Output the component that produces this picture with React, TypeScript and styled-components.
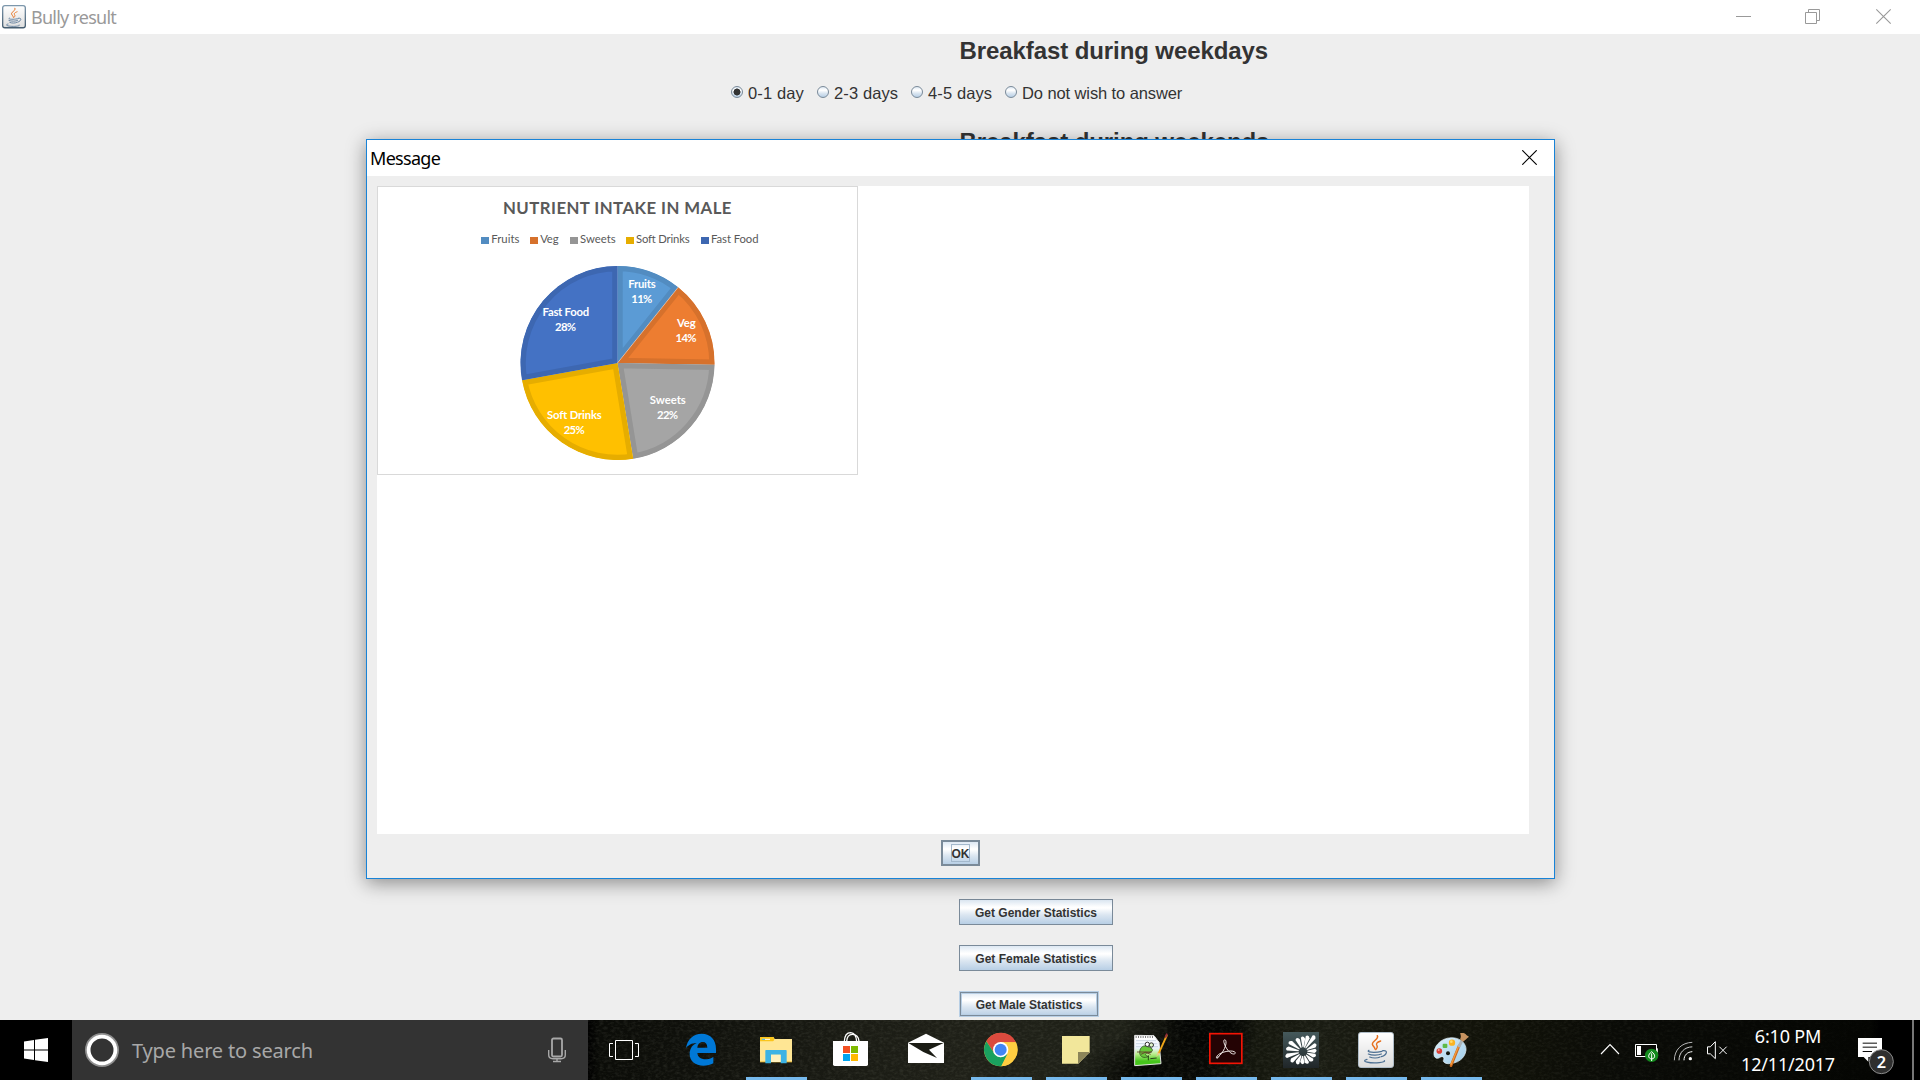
import React from "react";
import styled, { createGlobalStyle } from "styled-components";

const GlobalStyle = createGlobalStyle`
  html, body { margin: 0; padding: 0; overflow: hidden; }
  * { box-sizing: border-box; }
`;

const swing = `"Liberation Sans", Arial, sans-serif`;
const segoe = `"Noto Sans", "Segoe UI", sans-serif`;
const metal = `linear-gradient(180deg, #dde8f3 0%, #ffffff 30%, #ffffff 34%, #dbe6f1 62%, #b8cfe5 100%)`;

const Screen = styled.div`
  width: 1920px;
  height: 1080px;
  display: flex;
  flex-direction: column;
  background: #eeeeee;
  position: relative;
  overflow: hidden;
`;

const TitleBar = styled.header`
  height: 34px;
  flex: none;
  display: flex;
  align-items: center;
  gap: 5px;
  background: #ffffff;
  padding-left: 2px;
  svg { display: block; flex: none; }
`;

const WindowTitle = styled.span<{ $dim?: boolean; $spacing: number }>`
  font: 18px/34px ${segoe};
  letter-spacing: ${(p) => p.$spacing}px;
  color: ${(p) => (p.$dim ? "#999999" : "#000000")};
  white-space: nowrap;
  flex: 1;
`;

const Form = styled.main`
  flex: 1;
  min-height: 0;
  display: flex;
  flex-direction: column;
`;

const Question = styled.h2`
  margin: 0 0 0 959.5px;
  font: bold 24px/34px ${swing};
  letter-spacing: -0.09px;
  color: #333333;
  height: 34px;
  white-space: nowrap;
`;

const RadioRow = styled.div`
  display: flex;
  align-items: center;
  height: 24px;
  margin: 13px 0 19.5px 731px;
`;

const RadioLabel = styled.label<{ $width: number; $spacing?: number }>`
  width: ${(p) => p.$width}px;
  display: flex;
  align-items: center;
  gap: 5px;
  font: 16.5px/24px ${swing};
  letter-spacing: ${(p) => p.$spacing ?? 0.12}px;
  color: #333333;
  white-space: nowrap;
`;

const RadioDot = styled.span<{ $on?: boolean }>`
  width: 12px;
  height: 12px;
  margin-bottom: 2px;
  flex: none;
  border: 1px solid #7a8a99;
  border-radius: 50%;
  background: ${(p) =>
    p.$on
      ? "radial-gradient(circle, #333 0 3.2px, transparent 3.8px), " + metal
      : metal};
`;

const StatButtons = styled.div`
  margin: auto 0 3px 959px;
  display: flex;
  flex-direction: column;
  align-items: flex-start;
  gap: 20px;
`;

const MetalButton = styled.button<{ $width: number; $focus?: boolean }>`
  width: ${(p) => p.$width}px;
  height: 26px;
  padding: 2px 0 0;
  border: 1px solid ${(p) => (p.$focus ? "#b8cfe5" : "#7a8a99")};
  box-shadow: ${(p) => (p.$focus ? "inset 0 0 0 1px #7a8a99, inset 0 0 0 2px #b8cfe5" : "none")};
  background: ${metal};
  font: bold 12px/22px ${swing};
  color: #333333;
  white-space: nowrap;
`;

const Dialog = styled.section`
  position: absolute;
  left: 366px;
  top: 139px;
  width: 1189px;
  height: 740px;
  border: 1px solid #1883d7;
  background: #eeeeee;
  box-shadow: 0 4px 18px rgba(0, 0, 0, 0.42);
  display: flex;
  flex-direction: column;
`;

const DialogTitle = styled.header`
  height: 36px;
  flex: none;
  display: flex;
  align-items: center;
  background: #ffffff;
  padding: 0 17px 0 3px;
  svg { display: block; margin-bottom: 1px; }
`;

const MessagePane = styled.div`
  height: 648px;
  margin: 10px 25px 6px 10px;
  background: #ffffff;
  svg { display: block; }
`;

const OkButton = styled.button`
  align-self: flex-start;
  margin-left: 574px;
  width: 39px;
  height: 26px;
  padding: 0;
  border: 2px solid #7a8a99;
  background: ${metal};
  display: flex;
  align-items: center;
  justify-content: center;
`;

const OkText = styled.span`
  width: 19px;
  height: 18px;
  padding-top: 1px;
  border: 1px solid #a3b8cc;
  font: bold 12px/16px ${swing};
  letter-spacing: -0.1px;
  color: #333333;
  display: flex;
  justify-content: center;
`;

const Taskbar = styled.footer`
  height: 60px;
  flex: none;
  display: flex;
  position: relative;
  isolation: isolate;
  background:
    radial-gradient(ellipse 50px 60px at 1208px 0, #040503 40%, transparent),
    radial-gradient(ellipse 70px 50px at 1150px 100%, #060704 30%, transparent),
    linear-gradient(90deg, #000 0, #000 588px, #0b0c08 600px, #10110c 700px, #1a1b14 840px, #1f2018 960px, #1f2118 1120px, #090a06 1190px, #15170e 1260px, #1a1c13 1320px, #14150d 1400px, #111209 1500px, #0a0b07 1620px, #060704 1800px, #050603 1870px, #000 1880px);
`;

const Texture = styled.svg`
  position: absolute;
  left: 588px;
  top: 0;
  z-index: -1;
`;

const StartButton = styled.div`
  width: 72px;
  display: flex;
  align-items: center;
  justify-content: center;
`;

const SearchBox = styled.div`
  width: 516px;
  background: #333333;
  display: flex;
  align-items: center;
  padding: 0 21px 0 12px;
`;

const SearchText = styled.span`
  flex: 1;
  margin-left: 12px;
  font: 20px/60px ${segoe};
  letter-spacing: -0.17px;
  color: #a8a8a8;
  padding-top: 2px;
  white-space: nowrap;
`;

const TaskViewButton = styled.div`
  width: 76px;
  svg { display: block; }
`;

const AppButton = styled.div<{ $running?: boolean }>`
  width: 75px;
  height: 60px;
  background: ${(p) =>
    p.$running ? "linear-gradient(#76b9ed, #76b9ed) 7px 57px / 61px 3px no-repeat" : "none"};
  svg { display: block; }
`;

const Tray = styled.div`
  margin-left: 105px;
  display: flex;
  svg { display: block; flex: none; }
`;

const Clock = styled.div`
  width: 108px;
  display: flex;
  flex-direction: column;
  align-items: center;
  padding-top: 2px;
  margin-right: 8px;
  font: 18px/28px ${segoe};
  letter-spacing: -0.18px;
  color: #ffffff;
`;

const ShowDesktop = styled.div`
  margin-left: 12px;
  width: 8px;
  border-left: 2px solid #777777;
`;

/* ---------- pie chart ---------- */

type Slice = {
  name: string; pct: string; from: number; to: number; fill: string; edge: string;
  x: number; y: number; w: number; keyX: number; textX: number; textW: number;
};

const slices: Slice[] = [
  { name: "Fruits", pct: "11%", from: 0, to: 38.7, fill: "#5b9bd5", edge: "#528cc1", x: 265, y: 102.3, w: 27.3, keyX: 104, textX: 114.2, textW: 28.3 },
  { name: "Veg", pct: "14%", from: 38.7, to: 91, fill: "#ed7d31", edge: "#d6712c", x: 309.3, y: 141, w: 18.7, keyX: 153, textX: 163.2, textW: 18.3 },
  { name: "Sweets", pct: "22%", from: 91, to: 170.7, fill: "#a5a5a5", edge: "#959595", x: 290.8, y: 218, w: 36, keyX: 193, textX: 203, textW: 35.6 },
  { name: "Soft Drinks", pct: "25%", from: 170.7, to: 259.7, fill: "#ffc000", edge: "#e6ad00", x: 197.4, y: 233, w: 54.7, keyX: 249, textX: 259, textW: 53.7 },
  { name: "Fast Food", pct: "28%", from: 259.7, to: 360, fill: "#4472c4", edge: "#3d67b1", x: 188.8, y: 130, w: 46.5, keyX: 324, textX: 334, textW: 47.5 },
];

const CX = 240.5, CY = 177, R = 97;
const point = (deg: number) => {
  const a = (deg * Math.PI) / 180;
  return `${CX + R * Math.sin(a)} ${CY - R * Math.cos(a)}`;
};

function NutrientChart() {
  return (
    <svg width="481" height="289" viewBox="0 0 481 289" fontFamily="Lato, Carlito, sans-serif">
      <rect x="0.5" y="0.5" width="480" height="288" fill="#fff" stroke="#d9d9d9" />
      <text x="126" y="28" fontSize="16.8" fontWeight="700" fill="#595959" textLength="228.5">NUTRIENT INTAKE IN MALE</text>
      {slices.map((s, i) => {
        const d = `M${CX} ${CY} L${point(s.from)} A${R} ${R} 0 0 1 ${point(s.to)} Z`;
        return (
          <g key={s.name}>
            <rect x={s.keyX} y="51" width="8" height="7" fill={s.edge} />
            <text x={s.textX} y="56.7" fontSize="11.3" fill="#595959" textLength={s.textW}>{s.name}</text>
            <clipPath id={`slice${i}`}><path d={d} /></clipPath>
            <path d={d} fill={s.fill} stroke={s.edge} strokeWidth="10.5" clipPath={`url(#slice${i})`} />
          </g>
        );
      })}
      <path d={`M${CX} ${CY} L${point(38.7)}`} stroke="#e8d8cc" strokeWidth="0.6" />
      {slices.map((s) => (
        <g key={s.name} fill="#fff" fontSize="11.3" fontWeight="700">
          <text x={s.x - s.w / 2} y={s.y} textLength={s.w}>{s.name}</text>
          <text x={s.x - 10.7} y={s.y + 15} textLength="21">{s.pct}</text>
        </g>
      ))}
    </svg>
  );
}

/* ---------- icons ---------- */

function JavaGlyph() {
  return (
    <>
      <g fill="none" stroke="#e76f1c" strokeLinecap="round">
        <path d="M58 11 C64 22 42 27 43 36 C44 43 50 44 51 51" strokeWidth="4.5" />
        <path d="M68 27 C56 31 53 35 57 41 C60 46 57 49 53 53" strokeWidth="4" />
      </g>
      <g fill="none" stroke="#4c6f92" strokeLinecap="round" strokeWidth="3.6">
        <path d="M33 55 C22 61 50 63 72 58" />
        <path d="M31 66 C42 71 62 70 70 66" />
        <path d="M35 75 C44 79 59 79 66 75" />
        <path d="M74 56 C91 53 88 69 70 74" />
        <path d="M27 82 C5 88 37 95 64 92 C75 91 82 88 79 86" />
      </g>
    </>
  );
}

function JavaTitleIcon() {
  return (
    <svg width="24" height="26" viewBox="0 0 108 117">
      <defs>
        <linearGradient id="jt" x1="0" y1="0" x2="0" y2="1">
          <stop offset="0" stopColor="#fff" /><stop offset="1" stopColor="#dedede" />
        </linearGradient>
        <linearGradient id="jb" x1="0" y1="0" x2="0" y2="1">
          <stop offset="0" stopColor="#7d97ac" /><stop offset="1" stopColor="#465d70" />
        </linearGradient>
      </defs>
      <rect x="3" y="7" width="102" height="100" rx="10" fill="url(#jt)" stroke="url(#jb)" strokeWidth="6" />
      <g transform="translate(0 8)"><JavaGlyph /></g>
    </svg>
  );
}

const CloseIcon = ({ color }: { color: string }) => (
  <svg width="15" height="15" viewBox="0 0 15 15">
    <path d="M0.3 0.3 L14.7 14.7 M14.7 0.3 L0.3 14.7" stroke={color} strokeWidth="1.15" />
  </svg>
);

function CaptionButtons() {
  return (
    <svg width="184" height="34" viewBox="1736 0 184 34" fill="none" stroke="#999" strokeWidth="1">
      <path d="M1736 16.5 H1751" />
      <path d="M1805.5 12.5 H1816.5 V23.5 H1805.5 Z M1808.5 12 V9.5 H1819.5 V20.5 H1817" />
      <path d="M1876.3 9.3 L1890.7 23.7 M1890.7 9.3 L1876.3 23.7" strokeWidth="1.1" />
    </svg>
  );
}

const SlotIcon = ({ x, w = 225, children }: { x: number; w?: number; children: React.ReactNode }) => (
  <svg width={w / 3} height="60" viewBox={`${x} 30 ${w} 180`}>{children}</svg>
);

const Edge = () => (
  <SlotIcon x={252}>
    <path fill="#0078d7" d="M318 114 C322 88 340 71 365 71 C393 71 408 91 408 116 V129 H352 C353 144 368 149 380 148 C388 147 395 144 400 141 V160 C392 165 381 167 371 167 C345 167 329 153 329 132 C329 116 338 104 350 99 C342 99 328 101 318 114 Z M352 113 H382 C382 102 377 96 368 96 C359 96 353 103 352 113 Z" />
  </SlotIcon>
);

const Explorer = () => (
  <SlotIcon x={477}>
    <path d="M540 83 Q540 81 543 81 H580 L584 87 H636 V156 H540 Z" fill="#ffe694" />
    <path d="M540 83 Q540 81 543 81 H578 Q583 81 583 87 Q583 94 575 94 H540 Z" fill="#fac51c" />
    <path d="M546 88 H570" stroke="#fff" strokeWidth="3" /><path d="M546 88 H555" stroke="#3db3e4" strokeWidth="3" />
    <path d="M540 154 H636 V157 H540 Z" fill="#e8b93e" />
    <path d="M557 120 H618 Q620 120 620 123 V160 H602 V134 H573 V160 H556 V122 Z" fill="#3db3e4" />
    <path d="M573 134 H602 V156 H573 Z" fill="#fff1bd" />
  </SlotIcon>
);

const Store = () => (
  <SlotIcon x={702}>
    <path d="M793 94 C794 75 801 68 812 68 C825 69 829 80 830 94 M800 94 C801 79 807 73 817 73 C829 73 836 82 837 94" fill="none" stroke="#fff" strokeWidth="4" />
    <path d="M759 93 H864 V163 Q864 168 859 168 H764 Q759 168 759 163 Z" fill="#fff" />
    <rect x="789" y="108" width="21" height="21" fill="#f25022" />
    <rect x="813" y="108" width="21" height="21" fill="#7fba00" />
    <rect x="789" y="132" width="21" height="21" fill="#00a4ef" />
    <rect x="813" y="132" width="21" height="21" fill="#ffb900" />
  </SlotIcon>
);

const Mail = () => (
  <SlotIcon x={927}>
    <path d="M984 98 L1038 71 L1092 98 V159 H984 Z" fill="#fff" />
    <path d="M985 99 H1091 L1047 119 L1071 144 L1030 126 Z" fill="#1b1c15" />
  </SlotIcon>
);

const Chrome = () => (
  <SlotIcon x={-48}>
    <circle cx="62" cy="119" r="50" fill="#ffcd41" />
    <path d="M62 119 L62 97 H108 A50 50 0 0 0 19 94 L43 130 Z" fill="#db4a3e" />
    <path d="M19 94 L43 130 L62 142 L83 131 L64 169 A50 50 0 0 1 19 94 Z" fill="#1aa15f" />
    <path d="M83 131 L64 169 A50 50 0 0 0 108 97 H62 Z" fill="#ffcd41" />
    <circle cx="62" cy="119" r="23" fill="#fff" />
    <circle cx="62" cy="119" r="18" fill="#4285f4" />
  </SlotIcon>
);

const Notes = () => (
  <SlotIcon x={177}>
    <path d="M246 78 H329 V127 L295 161 H246 Z" fill="#f2e79b" />
    <path d="M294 126 H329 L294 161 Z" fill="#8c8559" />
  </SlotIcon>
);

const NotepadPlus = () => (
  <SlotIcon x={402}>
    <defs>
      <linearGradient id="npp" x1="0" y1="0" x2="0" y2="1">
        <stop offset="0.1" stopColor="#fff" /><stop offset="0.42" stopColor="#eaf3ff" />
        <stop offset="0.62" stopColor="#b9ee8a" /><stop offset="0.85" stopColor="#46c51c" />
      </linearGradient>
    </defs>
    <path d="M464 76 L522 77 L537 97 L543 161 L464 167 Z" fill="url(#npp)" stroke="#e4e4e4" strokeWidth="3" />
    <path d="M467 81 H520" stroke="#555" strokeWidth="5" strokeDasharray="3 4" />
    <path d="M468 92 H528 M468 101 H532 M468 110 H534" stroke="#b8c6d8" strokeWidth="2" />
    <path d="M479 128 C479 110 493 104 503 110 C519 112 524 127 505 128 C495 129 493 136 505 140 C493 145 480 142 479 128 Z" fill="#67c63b" stroke="#33561e" strokeWidth="2.5" />
    <circle cx="502" cy="103" r="6.5" fill="#fff" stroke="#333" strokeWidth="3" />
    <circle cx="514" cy="105" r="6.5" fill="#dff5cc" stroke="#333" strokeWidth="3" />
    <path d="M471 126 H515 M483 133 L496 127 L512 133" stroke="#673329" strokeWidth="2.5" fill="none" />
    <path d="M505 136 V151 M511 146 L530 144" stroke="#294518" strokeWidth="3" />
    <path d="M561 75 L536 130" stroke="#efa618" strokeWidth="5.5" />
    <path d="M561 71 L556 83" stroke="#932f38" strokeWidth="5.5" />
    <path d="M533 126 L529 140 L539 131 Z" fill="#e9c88d" />
  </SlotIcon>
);

const Acrobat = () => (
  <SlotIcon x={627}>
    <rect x="689.5" y="71" width="96" height="89" fill="#240304" stroke="#f31405" strokeWidth="5" />
    <path d="M710 143 C723 138 740 110 738 95 C737 86 729 88 732 98 C737 116 751 132 761 132 C771 131 766 123 752 123 C734 123 713 132 710 140 C708 145 711 147 717 140" fill="none" stroke="#eee7e5" strokeWidth="3" />
  </SlotIcon>
);

const Flower = () => (
  <SlotIcon x={42}>
    <defs><linearGradient id="fl" x1="0" y1="0" x2="0" y2="1"><stop offset="0" stopColor="#45595b" /><stop offset="1" stopColor="#202629" /></linearGradient></defs>
    <rect x="99" y="66" width="108" height="108" fill="url(#fl)" />
    <g fill="#fff">
      {[[-24, 46], [0, 47], [18, 52], [37, 61], [62, 47], [86, 42], [110, 42], [135, 42], [160, 40], [184, 39], [207, 43], [231, 49], [256, 56], [282, 53], [306, 53]].map(([a, len]) => (
        <path key={a} transform={`rotate(${a} 159 125)`} d={`M157.5 112 L152.5 ${125 - len + 5} Q159 ${125 - len - 4} 165.5 ${125 - len + 8} L160.5 112 Z`} />
      ))}
    </g>
  </SlotIcon>
);

const JavaApp = () => (
  <SlotIcon x={267}>
    <defs><linearGradient id="ja" x1="0" y1="0" x2="0" y2="1"><stop offset="0" stopColor="#fff" /><stop offset="1" stopColor="#dcdcdc" /></linearGradient></defs>
    <rect x="325.5" y="67.5" width="105" height="105" rx="7" fill="url(#ja)" stroke="#b0bdc8" strokeWidth="3" />
    <g transform="translate(324 66)"><JavaGlyph /></g>
  </SlotIcon>
);

const Paint = () => (
  <SlotIcon x={492}>
    <defs><linearGradient id="pa" x1="0" y1="0" x2="1" y2="1"><stop offset="0" stopColor="#dceffa" /><stop offset="1" stopColor="#9fcdea" /></linearGradient></defs>
    <path d="M552 135 C549 112 570 84 604 83 C634 83 650 103 648 121 C645 146 622 161 595 161 C585 161 577 155 581 149 C584 142 577 137 570 142 C562 148 554 145 552 135 Z" fill="url(#pa)" stroke="#eaf6fc" strokeWidth="2" />
    <circle cx="594" cy="130" r="6" fill="#15180f" />
    <circle cx="568" cy="123" r="8.5" fill="#dc4137" /><circle cx="566" cy="120" r="3" fill="#f4a29b" />
    <rect x="578" y="101" width="14" height="13" rx="3" fill="#5fba47" />
    <circle cx="606" cy="98" r="9.5" fill="#fbb321" /><circle cx="604" cy="95" r="4" fill="#ffdc6a" />
    <path d="M627 108 L603 167" stroke="#c9671b" strokeWidth="8" strokeLinecap="round" />
    <path d="M626 108 L603 164" stroke="#f39a3d" strokeWidth="4" strokeLinecap="round" />
    <path d="M636 92 L626 111" stroke="#aab4ba" strokeWidth="9" />
    <path d="M630 70 C637 68 645 68 650 76 L657 80 C651 84 644 92 639 95 L630 88 C634 82 633 76 630 70 Z" fill="#c69260" />
  </SlotIcon>
);

const apps: [React.FC, boolean][] = [
  [Edge, false], [Explorer, true], [Store, false], [Mail, false], [Chrome, true], [Notes, true],
  [NotepadPlus, true], [Acrobat, true], [Flower, true], [JavaApp, true], [Paint, true],
];

function TrayIcons() {
  return (
    <>
      <SlotIcon x={102} w={102}><path d="M123 132 L150 104 L177 132" fill="none" stroke="#fff" strokeWidth="3.5" /></SlotIcon>
      <SlotIcon x={204} w={117}>
        <path d="M226.5 103.5 H289.5 V139.5 H226.5 Z M292 115 V128" fill="none" stroke="#fff" strokeWidth="3" />
        <rect x="231" y="108" width="12" height="27" fill="#fff" />
        <circle cx="275" cy="136" r="20" fill="#128a1c" />
        <path d="M275 125 C263 134 263 145 275 147 C287 145 287 134 275 125 Z M275 130 V153" fill="none" stroke="#fff" strokeWidth="3" />
      </SlotIcon>
      <SlotIcon x={321} w={99}>
        <g fill="none" strokeWidth="3">
          <path d="M343 151 C343 119 365 98 397 97" stroke="#b5b5b5" />
          <path d="M357 151 C357 128 373 111 397 110.5" stroke="#d0d0d0" />
          <path d="M372 151 C372 135 382 126 397 125" stroke="#fff" />
        </g>
        <circle cx="391" cy="146" r="5" fill="#fff" />
      </SlotIcon>
      <SlotIcon x={420} w={102}>
        <path d="M442.5 110.5 H451 L466 95 V146 L451 131.5 H442.5 Z M478 110 L500 132 M500 110 L478 132" fill="none" stroke="#fff" strokeWidth="3" />
      </SlotIcon>
    </>
  );
}

const Notifications = () => (
  <SlotIcon x={870} w={150}>
    <path d="M894 84 H966 V141 H925 V155 L911 141 H894 Z" fill="#fff" />
    <path d="M908 99.5 H951 M908 111.5 H951 M908 124.5 H936" stroke="#0a0a08" strokeWidth="3" />
    <circle cx="964" cy="155" r="36" fill="#2f2f2f" stroke="#8b8b8b" strokeWidth="3" />
    <text x="964" y="173" textAnchor="middle" fontFamily={segoe} fontSize="49" fontWeight="600" fill="#fff">2</text>
  </SlotIcon>
);

export default function App() {
  return (
    <>
      <GlobalStyle />
      <Screen>
        <TitleBar>
          <JavaTitleIcon />
          <WindowTitle $dim $spacing={-0.75}>Bully result</WindowTitle>
          <CaptionButtons />
        </TitleBar>
        <Form>
          <Question>Breakfast during weekdays</Question>
          <RadioRow>
            <RadioLabel $width={86}><RadioDot $on />0-1 day</RadioLabel>
            <RadioLabel $width={94}><RadioDot />2-3 days</RadioLabel>
            <RadioLabel $width={94}><RadioDot />4-5 days</RadioLabel>
            <RadioLabel $width={190} $spacing={-0.1}><RadioDot />Do not wish to answer</RadioLabel>
          </RadioRow>
          <Question>Breakfast during weekends</Question>
          <StatButtons>
            <MetalButton $width={154}>Get Gender Statistics</MetalButton>
            <MetalButton $width={154}>Get Female Statistics</MetalButton>
            <MetalButton $width={140} $focus>Get Male Statistics</MetalButton>
          </StatButtons>
        </Form>
        <Taskbar>
          <Texture width="1290" height="60">
            <filter id="grain" x="0" y="0" width="100%" height="100%">
              <feTurbulence type="fractalNoise" baseFrequency="0.25 0.4" numOctaves="3" seed="4" />
              <feColorMatrix values="0 0 0 0 0.3  0 0 0 0 0.31  0 0 0 0 0.24  0.3 0 0 0 -0.12" />
            </filter>
            <linearGradient id="fade"><stop offset="0.6" stopColor="#fff" /><stop offset="1" stopColor="#333" /></linearGradient>
            <mask id="fadeMask"><rect width="1290" height="60" fill="url(#fade)" /></mask>
            <g mask="url(#fadeMask)"><rect width="1290" height="60" filter="url(#grain)" /></g>
          </Texture>
          <StartButton>
            <svg width="24" height="24" viewBox="0 0 24 24" fill="#fff">
              <path d="M0 3.4 L10 2 V11.4 H0 Z M11 1.8 L24 0 V11.4 H11 Z M0 12.4 H10 V22 L0 20.6 Z M11 12.4 H24 V24 L11 22.2 Z" />
            </svg>
          </StartButton>
          <SearchBox>
            <svg width="36" height="36" viewBox="0 0 36 36" fill="none">
              <circle cx="18" cy="18" r="16" stroke="#8f8f8f" strokeWidth="2" />
              <circle cx="18" cy="18" r="13.4" stroke="#fff" strokeWidth="3.8" />
            </svg>
            <SearchText>Type here to search</SearchText>
            <svg width="20" height="26" viewBox="0 0 20 26" fill="none" stroke="#a8a8a8" strokeWidth="1.4">
              <rect x="5" y="1.5" width="10" height="18" rx="1.5" strokeWidth="1.8" />
              <path d="M1.7 13 V18 Q1.7 21.7 6 21.7 H14 Q18.3 21.7 18.3 18 V13 M10 22 V24.3 M6 24.5 H14" />
            </svg>
          </SearchBox>
          <TaskViewButton>
            <SlotIcon x={24} w={228}>
              <path d="M106.5 91.5 H157.5 V148.5 H106.5 Z M99 100.5 H88.5 V139.5 H99 M165 100.5 H175.5 V139.5 H165" fill="none" stroke="#fff" strokeWidth="3" />
            </SlotIcon>
          </TaskViewButton>
          {apps.map(([Icon, running], i) => (
            <AppButton key={i} $running={running}><Icon /></AppButton>
          ))}
          <Tray>
            <TrayIcons />
            <Clock><span>6:10 PM</span><span>12/11/2017</span></Clock>
            <Notifications />
            <ShowDesktop />
          </Tray>
        </Taskbar>
        <Dialog>
          <DialogTitle>
            <WindowTitle $spacing={-0.7}>Message</WindowTitle>
            <CloseIcon color="#000" />
          </DialogTitle>
          <MessagePane><NutrientChart /></MessagePane>
          <OkButton><OkText>OK</OkText></OkButton>
        </Dialog>
      </Screen>
    </>
  );
}
